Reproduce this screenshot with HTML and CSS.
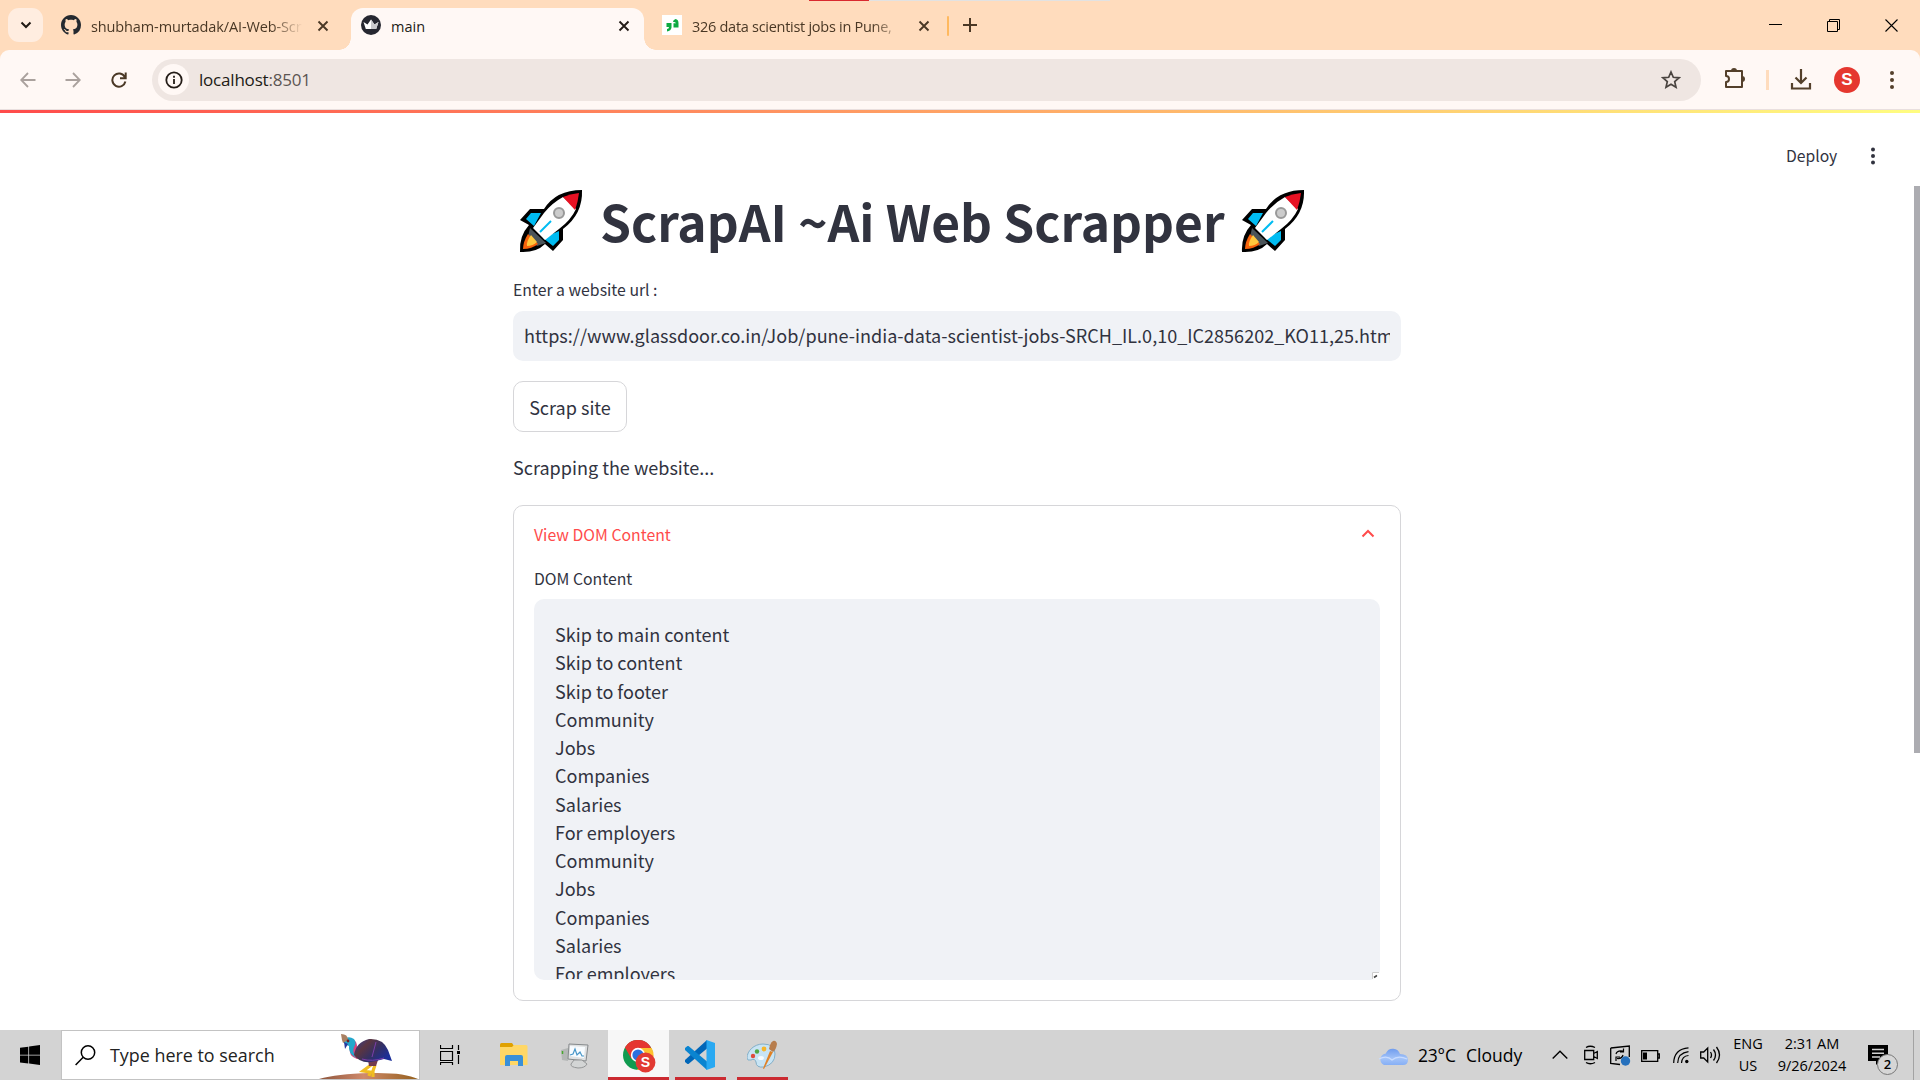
FILE: index.html
```html
<!DOCTYPE html>
<html lang="en">
<head>
<meta charset="utf-8">
<title>main</title>
<link rel="stylesheet" href="styles.css">
</head>
<body>
<svg width="0" height="0" class="defs">
  <symbol id="close" viewBox="0 0 12 12"><path d="M1.500 1.500l9 9M10.500 1.500l-9 9" stroke="currentColor" stroke-width="1.900" fill="none"/></symbol>
  <symbol id="rocket" viewBox="0 0 64 64">
    <path d="M63 1Q37 1 25 20H11L1 31l9 5Q0 47 1 63q16 1 25-8l8 7 10-11V40Q64 25 63 1Z" fill="#000"/>
    <path d="M22 24H12l-5 6 8 7zM40 42v9l-6 6-10-8z" fill="#00bcf2"/>
    <path d="M44 8Q33 14 25 24L14 39l12 12 14-11q12-9 17-20z" fill="#fff"/>
    <path d="M44 8q7-3 16-4-1 9-4 17z" fill="#e81123"/>
    <path d="M11 39L27 54l-9 3-9-9z" fill="#4a5459"/>
    <path d="M9 45Q4 53 4 60q9 0 15-5z" fill="#f7630c"/>
    <path d="M12 46q-5 7-4 11 6 0 10-4z" fill="#ffc83d"/>
    <path d="M21 43l11-11" stroke="#00bcf2" stroke-width="2"/>
    <circle cx="40" cy="24" r="5" fill="#ccc" stroke="#999" stroke-width="2"/>
  </symbol>
</svg>

<header class="tabstrip">
  <button class="tab-search"><svg width="12" height="8" viewBox="0 0 12 8"><path d="M1.500 1.500L6 6l4.500-4.500" fill="none" stroke="#211a14" stroke-width="2"/></svg></button>
  <div class="tab tab-github">
    <svg class="favicon" viewBox="0 0 16 16"><path fill="#24292f" d="M8 0C3.580 0 0 3.580 0 8c0 3.540 2.290 6.530 5.470 7.590.4.070.55-.17.55-.38 0-.19-.01-.82-.01-1.490-2.010.37-2.530-.49-2.690-.94-.09-.23-.48-.94-.82-1.130-.28-.15-.68-.52-.01-.53.63-.01 1.080.58 1.230.82.72 1.210 1.870.87 2.330.66.07-.52.28-.87.51-1.070-1.780-.2-3.640-.89-3.640-3.950 0-.87.31-1.590.82-2.150-.08-.2-.36-1.020.08-2.120 0 0 .67-.21 2.200.82.64-.18 1.320-.27 2-.27s1.360.09 2 .27c1.530-1.040 2.200-.82 2.200-.82.44 1.100.16 1.920.08 2.120.51.56.82 1.270.82 2.150 0 3.070-1.870 3.750-3.650 3.950.29.25.54.73.54 1.480 0 1.070-.01 1.930-.01 2.200 0 .21.15.46.55.38A8 8 0 0 0 16 8c0-4.420-3.580-8-8-8z"/></svg>
    <span class="tab-title faded t-git">shubham-murtadak/AI-Web-Scr</span>
    <svg class="tab-close"><use href="#close"/></svg>
  </div>
  <div class="tab tab-active">
    <svg class="favicon" viewBox="0 0 20 20"><circle cx="10" cy="10" r="10" fill="#262730"/><path d="M2.500 7l4 2.500L10 4.500l3.500 5 4-2.500-2.300 7H4.800z" fill="#fff"/><path d="M10 4.500l3.500 5 4-2.500-2.300 7H10z" fill="#c9c9cc"/></svg>
    <span class="tab-title t-main">main</span>
    <svg class="tab-close"><use href="#close"/></svg>
  </div>
  <div class="tab tab-glass">
    <svg class="favicon" viewBox="0 0 20 20"><path d="M0 0h20v20H0z" fill="#fff"/><path d="M4.500 8h5v4.500Q9 16 5 16.500V14q2 0 2-2H4.500zM11 7q0-2 2.500-3Q16.500 4.500 16.500 8v4.500h-5V8.200H14Q13 6.500 11 7z" fill="#0caa41"/></svg>
    <span class="tab-title faded t-glass">326 data scientist jobs in Pune, </span>
    <svg class="tab-close"><use href="#close"/></svg>
  </div>
  <i class="tab-sep"></i>
  <svg class="new-tab" width="14" height="14" viewBox="0 0 14 14"><path d="M7 0v14M0 7h14" stroke="#4a3825" stroke-width="2"/></svg>
  <svg class="window-controls" width="130" height="14" viewBox="0 0 130 14"><path d="M0 5.500h13M58.500 2.500h10v10h-10zM60.500 2.500v-2h10v10h-2" fill="none" stroke="#000"/><path d="M116.500.5l12 12M128.500.5l-12 12" stroke="#000" stroke-width="1.100"/></svg>
  <i class="share-line"></i>
</header>

<nav class="toolbar">
  <div class="toolbar-inner">
    <svg class="back" width="16" height="16" viewBox="0 0 16 16"><path d="M15.500 8H1.500M8 1L1.200 8 8 15" fill="none" stroke="#aaa19d" stroke-width="1.800"/></svg>
    <svg class="forward" width="16" height="16" viewBox="0 0 16 16"><path d="M.5 8h14M8 1l6.800 7L8 15" fill="none" stroke="#aaa19d" stroke-width="1.800"/></svg>
    <svg class="reload" width="16" height="16" viewBox="0 0 16 16"><path d="M13.800 5A6.600 6.600 0 1 0 14.400 9.500M14.700.5v5.700H9" fill="none" stroke="#4a3825" stroke-width="2"/></svg>
    <div class="omnibox">
      <span class="site-info"><svg width="18" height="18" viewBox="0 0 18 18"><circle cx="9" cy="9" r="7.700" fill="none" stroke="#241c17" stroke-width="1.800"/><path d="M9 8v5M9 4.800v1.900" stroke="#241c17" stroke-width="1.800"/></svg></span>
      <span class="url">localhost<b>:8501</b></span>
      <svg class="star" width="20" height="20" viewBox="0 0 20 20"><path d="M10 2l2.300 5.300 5.700.5-4.300 3.800 1.300 5.600-5-3-5 3 1.300-5.600L2 7.800l5.700-.5z" fill="none" stroke="#4a4440" stroke-width="1.700"/></svg>
    </div>
    <svg class="puzzle" width="22" height="22" viewBox="0 0 22 22"><path d="M2 4h16v16H2v-5q3 0 3-3t-3-3z" fill="none" stroke="#54402b" stroke-width="2" stroke-linejoin="round"/><path d="M7 4a3 3 0 0 1 6 0zM18 9a3 3 0 0 1 0 6z" fill="#54402b"/></svg>
    <i class="tool-sep"></i>
    <svg class="download" width="22" height="22" viewBox="0 0 22 22"><path d="M11 0v14M5.500 8.500L11 14l5.500-5.500M2 14v5.500h18V14" fill="none" stroke="#54402b" stroke-width="2.200"/></svg>
    <span class="avatar">S</span>
    <svg class="kebab" width="4" height="20" viewBox="0 0 4 20"><g fill="#54402b"><circle cx="2" cy="3" r="2"/><circle cx="2" cy="10" r="2"/><circle cx="2" cy="17" r="2"/></g></svg>
  </div>
</nav>

<main class="page">
  <div class="decoration"></div>
  <div class="app-bar"><span class="deploy">Deploy</span><svg width="4" height="20" viewBox="0 0 4 20"><g fill="#31333f"><circle cx="2" cy="3.500" r="2"/><circle cx="2" cy="10" r="2"/><circle cx="2" cy="16.500" r="2"/></g></svg></div>
  <div class="content">
    <h1><svg class="rocket"><use href="#rocket"/></svg><span class="title-text">ScrapAI ~Ai Web Scrapper</span><svg class="rocket"><use href="#rocket"/></svg></h1>
    <label class="small url-label">Enter a website url :</label>
    <div class="url-input"><span>https://www.glassdoor.co.in/Job/pune-india-data-scientist-jobs-SRCH_IL.0,10_IC2856202_KO11,25.htm</span></div>
    <button class="scrap">Scrap site</button>
    <p class="status">Scrapping the website...</p>
    <section class="expander">
      <div class="expander-head small"><span>View DOM Content</span><svg width="14" height="9" viewBox="0 0 14 9"><path d="M1.500 7.500L7 2l5.500 5.500" fill="none" stroke="#ff4b4b" stroke-width="2"/></svg></div>
      <label class="small dom-label">DOM Content</label>
      <div class="dom-area"><pre>Skip to main content
Skip to content
Skip to footer
Community
Jobs
Companies
Salaries
For employers
Community
Jobs
Companies
Salaries
For employers</pre>
        <svg class="grip" width="8" height="8" viewBox="0 0 8 8"><path d="M0 8V0h8L7 5 4 7.500z" fill="#fff"/><path d="M.5 7V.5H7" fill="none" stroke="#ccc"/><path d="M2 5.500l3-2" stroke="#444" stroke-width="1.600"/></svg>
      </div>
    </section>
  </div>
  <i class="scrollbar"></i>
</main>

<footer class="taskbar">
  <svg class="start" width="20" height="20" viewBox="0 0 20 20"><path d="M0 2.800L8.300 1.700v8H0zM9.100 1.500L20 0v9.700H9.100zM0 10.500h8.300v8L0 17.400zM9.100 10.500H20V20L9.100 18.600z"/></svg>
  <div class="search">
    <svg class="lens" width="21" height="21" viewBox="0 0 21 21"><circle cx="13" cy="7.500" r="6.700" fill="none" stroke="#000" stroke-width="1.500"/><path d="M8.200 12.300L.6 20" stroke="#000" stroke-width="1.500"/></svg>
    <span class="search-text">Type here to search</span>
    <svg class="bird" width="100" height="48" viewBox="0 0 100 48">
      <defs>
        <linearGradient id="body" x1="0" y1="0" x2="1" y2=".6"><stop offset="0" stop-color="#2c3f9c"/><stop offset=".35" stop-color="#5a3541"/><stop offset=".65" stop-color="#343064"/><stop offset="1" stop-color="#1b2f9a"/></linearGradient>
        <linearGradient id="mound"><stop offset="0" stop-color="#8c543a"/><stop offset=".45" stop-color="#d08a6c"/><stop offset="1" stop-color="#94601c"/></linearGradient>
      </defs>
      <path d="M0 48q18-5 50-6 35-1 49 6z" fill="url(#mound)"/>
      <g transform="translate(0 2)">
      <path d="M52 32l-8 6 7 1-1 4M56 32l-2 6 0 6" stroke="#f0bd20" stroke-width="3.200" fill="none"/>
      <path d="M49 27h10l-2 6h-7z" fill="#713a4f"/>
      <path d="M31 5q8 2 7 11l4 8-4 2q-9-3-7-12z" fill="#d8447f"/>
      <path d="M24 7q5-5 11-1 3 4 0 8-2 5 2 11-8-5-7-12-6-2-6-6z" fill="#24a8cc"/>
      <path d="M22 1q7 0 7 6l-5 3-1-3z" fill="#a98062"/>
      <path d="M25 9l4 2-3 5z" fill="#293a9e"/><circle cx="29" cy="8" r="1.400" fill="#6c2027"/>
      <path d="M35 22q2-13 15-16 14-1 19 11l4 11-8-2-8 2q-15 4-22-6z" fill="url(#body)"/>
      <path d="M57 9l-4 15M43 26q10 3 22-1" stroke="#7b3eaa" fill="none"/>
      </g>
    </svg>
  </div>
  <svg class="taskview" width="20" height="20" viewBox="0 0 20 20"><path d="M.5 0v3.500h12V0M.5 6.500h12v9H.5zM.5 20v-2.500h12V20M18.500 0v5M18.500 10v9" fill="none" stroke="#000" stroke-width="1.200"/><path d="M17 6h3v3h-3z"/></svg>
  <svg class="folder" width="28" height="24" viewBox="0 0 28 24"><path d="M0 1.500Q0 0 1.500 0H12l2 3-2 2H0z" fill="#e0a100"/><path d="M0 4h12l2-2h12q1.500 0 1.500 1.500V22H0z" fill="#ffd766"/><path d="M5 23V14q0-2 2-2h14q2 0 2 2v9h-5v-5h-8v5z" fill="#3a90d8"/></svg>
  <svg class="monitor" width="28" height="26" viewBox="0 0 28 26"><path d="M0 7l7-2v13l-6-1z" fill="#b4b7b6"/><path d="M1.500 8v3" stroke="#49a82d" stroke-width="1.500"/><path d="M8 1l19 1-2 16-18-2z" fill="#dfe1e2" stroke="#85898b"/><path d="M9 3l15 1-1 11-14-2z" fill="#f8fcff"/><path d="M9 12l3-1 2-5 2 6 3-3 2 4h2" fill="none" stroke="#4796c8" stroke-width="1.200"/><path d="M13 17h8l5 4q-2 4-9 4-8-1-7-4z" fill="#d3d5d5" stroke="#949697"/></svg>
  <span class="task task-chrome">
    <svg width="33" height="33" viewBox="0 0 33 33"><circle cx="15" cy="15" r="15" fill="#119b50"/><path d="M15 15L2 7.500A15 15 0 0 1 28 7.500H15z" fill="#e53730"/><path d="M15 15l6.500 3.800L14 30A15 15 0 0 0 28.700 8H15z" fill="#fdc22f"/><path d="M2 7.500L8.500 19 15 8h13A15 15 0 0 0 2 7.500z" fill="#e53730"/><circle cx="15" cy="15" r="7.200" fill="#fff"/><circle cx="15" cy="15" r="5.600" fill="#2c6fe0"/><circle cx="22.500" cy="22.500" r="9.900" fill="#e23a33"/><text x="22.500" y="27.300" class="profile-letter">S</text></svg>
  </span>
  <span class="task task-code">
    <svg width="30" height="30" viewBox="0 0 30 30"><path d="M22 0L0 20v2l2.500 2h1L22 8.500z" fill="#0066b8"/><path d="M22 30L0 10V8l2.500-2h1L22 21.500z" fill="#0a84d0"/><path d="M21.500 0L30 3v24l-8.500 3z" fill="#29a9f2"/></svg>
  </span>
  <span class="task task-paint">
    <svg width="32" height="30" viewBox="0 0 32 30"><path d="M16 4C7 4 0 11 0 18q0 3 4 2 4-2 5 2 0 6 8 5 11-3 11-13Q28 4 16 4z" fill="#c8e4f4" stroke="#83afc8"/><circle cx="6" cy="16" r="2.200" fill="#df4b3d"/><circle cx="10" cy="11.500" r="2.200" fill="#51a845"/><circle cx="17" cy="9" r="2.400" fill="#f5b62c"/><ellipse cx="14" cy="18" rx="3" ry="2" fill="#f7fbfd"/><path d="M23 11l3 1-9 17-1-.5z" fill="#e08125"/><path d="M22 9q1-6 4-8 3-1 4 3-1 6-4 8z" fill="#b77d4d"/></svg>
  </span>
  <svg class="cloud" width="30" height="20" viewBox="0 0 30 20"><defs><linearGradient id="sky" x2="0" y2="1"><stop offset="0" stop-color="#6f9cee"/><stop offset=".6" stop-color="#a3c3f8"/><stop offset="1" stop-color="#86aff5"/></linearGradient></defs><path d="M6 20a6 6 0 0 1 0-11q2 0 2-1a7.500 7.500 0 0 1 14 1q8 0 8 6 0 5-5 5z" fill="url(#sky)"/><path d="M1 14q8-4 13 1 6-5 15-1" fill="none" stroke="#c9dcff" stroke-width="1.200"/></svg>
  <span class="temp">23°C</span><span class="sky">Cloudy</span>
  <svg class="tray-up" width="16" height="9" viewBox="0 0 16 9"><path d="M.7 8.500L8 1.200l7.300 7.300" fill="none" stroke="#000" stroke-width="1.400"/></svg>
  <svg class="meet" width="14" height="20" viewBox="0 0 14 20"><path d="M2 2.500Q6 0 11 2.500M2 17.500q4 2.500 9 0M.7 5.500h9v9h-9zM9.700 8.500l3.600-2v7l-3.600-2" fill="none" stroke="#000" stroke-width="1.300"/></svg>
  <svg class="sync" width="21" height="21" viewBox="0 0 21 21"><path d="M.7 3L19.300 1v11M.7 3v15.500L10 19.500" fill="none" stroke="#000" stroke-width="1.300"/><path d="M6 9q1-4 7-3M13.500 3.500V7H10M13 10q-1 4-6 3.500M6 16v-4h4" fill="none" stroke="#000" stroke-width="1.200"/><circle cx="15.500" cy="16" r="4.700" fill="#2671bd"/></svg>
  <svg class="battery" width="19" height="12" viewBox="0 0 19 12"><path d="M.7.7h16v10.600h-16zM17 4h1.300v4H17" fill="none" stroke="#000" stroke-width="1.300"/><path d="M2 2.500h4v7H2z"/></svg>
  <svg class="wifi" width="16" height="17" viewBox="0 0 16 17"><path d="M.7 16Q1 2 15.500.8M4.700 16Q5 6 15.500 4.700M8.500 16q.5-7 7-7.500" fill="none" stroke="#000" stroke-width="1.200"/><circle cx="13.800" cy="14.500" r="1.700"/></svg>
  <svg class="volume" width="21" height="18" viewBox="0 0 21 18"><path d="M.7 6h3l4-4v14l-4-4h-3zM10.500 6q2 3 0 6M13.500 3.500q4 5.500 0 11M16.500 1q6 8 0 16" fill="none" stroke="#000" stroke-width="1.300"/></svg>
  <div class="tray-text lang"><span class="eng">ENG</span><span class="us">US</span></div>
  <div class="tray-text clock"><span class="time">2:31 AM</span><span class="date">9/26/2024</span></div>
  <div class="notify"><svg width="20" height="20" viewBox="0 0 20 20"><path d="M0 0h20v16h-8l-4 4v-4H0z"/><path d="M4 4.500h12M4 8.300h12M4 12h8" stroke="#d3d3d3" stroke-width="1.400"/></svg><span class="badge">2</span></div>
  <i class="show-desktop"></i>
</footer>
</body>
</html>
```
FILE: styles.css
```css
* { box-sizing: border-box; }
body { margin: 0; width: 1920px; height: 1080px; overflow: hidden; display: flex; flex-direction: column; background: #fff; font-family: "Noto Sans CJK JP", "Noto Sans", sans-serif; color: #31333f; }
svg { flex: none; display: block; }
.defs { position: absolute; }
button { padding: 0; border: 0; background: none; font: inherit; color: inherit; }

/* tab strip */
.tabstrip { height: 50px; flex: none; display: flex; align-items: flex-start; background: #ffdcbd; padding: 8px 0 0 8px; position: relative; font: 14.5px/20px "Open Sans", "Noto Sans", sans-serif; color: #4a3825; }
.tab-search { width: 35px; height: 34px; border-radius: 11px; background: #ffede0; display: flex; align-items: center; justify-content: center; }
.tab { display: flex; height: 42px; padding: 7px 0 0 10px; color: #4a3825; }
.tab-github { width: 300px; margin-left: 8px; }
.tab-active { width: 293px; background: #fff8f5; border-radius: 12px 12px 0 0; position: relative; color: #241c17; }
.tab-active::before, .tab-active::after { content: ""; position: absolute; bottom: 0; width: 12px; height: 12px; }
.tab-active::before { left: -12px; background: radial-gradient(circle at 0 0, transparent 11.500px, #fff8f5 12px); }
.tab-active::after { right: -12px; background: radial-gradient(circle at 100% 0, transparent 11.500px, #fff8f5 12px); }
.tab-glass { width: 293px; padding-left: 18px; }
.favicon { width: 20px; height: 20px; }
.tab-title { margin: 2px 0 0 10px; width: 212px; flex: none; overflow: hidden; white-space: nowrap; }
.t-git { letter-spacing: -.12px; }
.t-main { width: 226px; }
.t-glass { letter-spacing: -.28px; width: 210px; }
.faded { -webkit-mask-image: linear-gradient(90deg, #000 180px, transparent 212px); mask-image: linear-gradient(90deg, #000 180px, transparent 212px); }
.tab-close { width: 12px; height: 12px; margin: 5px 0 0 14px; }
.t-main + .tab-close { margin-left: 1px; }
.t-glass + .tab-close { margin-left: 16px; }
.tab-sep { width: 2px; height: 20px; background: #ffb95f; margin: 8px 0 0 10px; border-radius: 1px; }
.new-tab { margin: 10px 0 0 14px; }
.window-controls { margin: 11px 21px 0 auto; }
.share-line { position: absolute; left: 809px; top: 0; width: 301px; height: 1px; background: linear-gradient(90deg, #d9292f 60px, #e2e2e2 60px); }

/* toolbar */
.toolbar { height: 60px; flex: none; background: #ffdcbd; }
.toolbar-inner { height: 60px; background: #fff8f5; border-radius: 9px 9px 0 0; border-bottom: 1px solid #e9dfde; display: flex; align-items: center; padding-left: 20px; }
.forward { margin-left: 29px; }
.reload { margin-left: 30px; }
.omnibox { width: 1549px; height: 42px; border-radius: 21px; background: #efe6e2; margin-left: 25px; display: flex; align-items: center; padding: 0 20px 0 6px; }
.site-info { width: 31px; height: 31px; border-radius: 50%; background: #fff8f5; display: flex; align-items: center; justify-content: center; }
.url { margin-left: 10px; font: 17px/24px "Open Sans", "Noto Sans", sans-serif; color: #211a15; letter-spacing: -.2px; }
.url b { font-weight: 400; color: #5c5552; }
.star { margin-left: auto; }
.puzzle { margin: 0 0 4px 23px; }
.tool-sep { width: 3px; height: 20px; background: #ffdcbd; margin-left: 20px; }
.download { margin-left: 21px; }
.avatar { width: 26px; height: 26px; margin-left: 22px; border-radius: 50%; background: #e5372f; color: #fff; font: 700 17px/26px "Liberation Sans", sans-serif; text-align: center; }
.kebab { margin-left: 30px; }

/* app */
.page { flex: 1; position: relative; display: flex; flex-direction: column; background: #fff; min-height: 0; }
.decoration { height: 3px; flex: none; background: linear-gradient(90deg, #ff4b4b, #fffd80); }
.app-bar { height: 73px; flex: none; display: flex; align-items: center; justify-content: flex-end; padding: 12px 45px 0 0; font-size: 15.700px; line-height: 24px; }
.deploy { width: 53px; margin-right: 32px; white-space: nowrap; }
.content { width: 888px; margin-left: 513px; display: flex; flex-direction: column; align-items: flex-start; }
h1 { margin: 3px 0 0; height: 67px; display: flex; align-items: flex-start; font-size: 49.700px; line-height: 66px; font-weight: 700; white-space: nowrap; }
.rocket { width: 64px; height: 64px; margin-left: 6px; }
.title-text { width: 640px; margin-left: 17px; margin-top: -2px; }
.title-text + .rocket { margin-left: 1px; }
.small { font-size: 15.800px; line-height: 24px; }
.url-label { margin-top: 22px; white-space: nowrap; }
.url-input { width: 888px; height: 50px; margin-top: 9px; background: #f0f2f6; border-radius: 10px; padding: 0 11px; font-size: 18.060px; line-height: 48px; white-space: nowrap; }
.url-input span { display: block; width: 866px; overflow: hidden; }
.scrap { width: 114px; height: 51px; margin-top: 20px; border: 1px solid #d6d6d9; border-radius: 10px; font-size: 18.050px; line-height: 48px; white-space: nowrap; }
.status { margin: 19px 0 0; font-size: 18.050px; line-height: 32px; }
.expander { width: 888px; height: 496px; margin-top: 22px; border: 1px solid #d6d6d9; border-radius: 10px; padding: 17px 20px 0; display: flex; flex-direction: column; }
.expander-head { display: flex; justify-content: space-between; color: #ff4b4b; padding-right: 5px; }
.expander-head svg { margin-top: 6px; }
.dom-label { margin-top: 20px; }
.dom-area { height: 381px; margin-top: 8px; background: #f0f2f6; border-radius: 10px; padding: 21px 21px 0; overflow: hidden; position: relative; }
.dom-area pre { margin: 0; height: 359px; overflow: hidden; font: 18.050px/28.270px "Noto Sans CJK JP", "Noto Sans", sans-serif; }
.grip { position: absolute; right: 0; bottom: 0; }
.scrollbar { position: absolute; right: 0; top: 76px; width: 6px; height: 567px; background: #acacb1; }

/* taskbar */
.taskbar { height: 50px; flex: none; background: #d3d3d3; display: flex; align-items: flex-start; color: #000; font-family: "Open Sans", "Noto Sans", sans-serif; white-space: nowrap; }
.start { margin: 15px 0 0 20px; }
.search { width: 359px; height: 50px; margin-left: 21px; border: 1px solid #c3c3c3; background: #fff; display: flex; }
.lens { margin: 14px 0 0 13px; }
.search-text { width: 196px; margin: 11px 0 0 14px; font-size: 17.900px; line-height: 26px; color: #222; }
.bird { margin: 0 0 0 13px; }
.taskview { margin: 15px 0 0 20px; }
.folder { margin: 13px 0 0 40px; }
.monitor { margin: 13px 0 0 33px; }
.task { height: 50px; border-bottom: 3px solid #cb2a31; }
.task-chrome { width: 61px; margin-left: 19px; background: #f7f7f7; padding: 10px 0 0 15px; }
.profile-letter { font: 700 14px "Liberation Sans", sans-serif; fill: #fff; text-anchor: middle; }
.task-code { width: 51px; margin-left: 6px; padding: 10px 0 0 10px; }
.task-paint { width: 51px; margin-left: 11px; padding: 10px 0 0 10px; }
.cloud { margin: 15px 0 0 590px; }
.temp, .sky { font-size: 17.500px; line-height: 26px; margin-top: 12px; }
.temp { width: 38px; margin-left: 10px; letter-spacing: -.2px; }
.sky { width: 56px; margin-left: 10px; }
.tray-up { margin: 20px 0 0 30px; }
.meet { margin: 15px 0 0 16px; }
.sync { margin: 15px 0 0 12px; }
.battery { margin: 20px 0 0 10px; }
.wifi { margin: 17px 0 0 13px; }
.volume { margin: 16px 0 0 11px; }
.tray-text { display: flex; flex-direction: column; align-items: center; font-size: 14.500px; line-height: 22px; margin-top: 3px; }
.lang { width: 30px; margin-left: 12px; }
.clock { width: 70px; margin-left: 14px; }
.notify { width: 20px; margin: 15px 0 0 21px; position: relative; }
.badge { position: absolute; left: 9px; top: 9px; width: 21px; height: 21px; border: 1px solid #777; border-radius: 50%; background: #d6d6d6; font-size: 13px; line-height: 19px; text-align: center; font-weight: 600; }
.show-desktop { width: 1px; height: 50px; background: #a3a3a3; margin-left: 25px; }
```
